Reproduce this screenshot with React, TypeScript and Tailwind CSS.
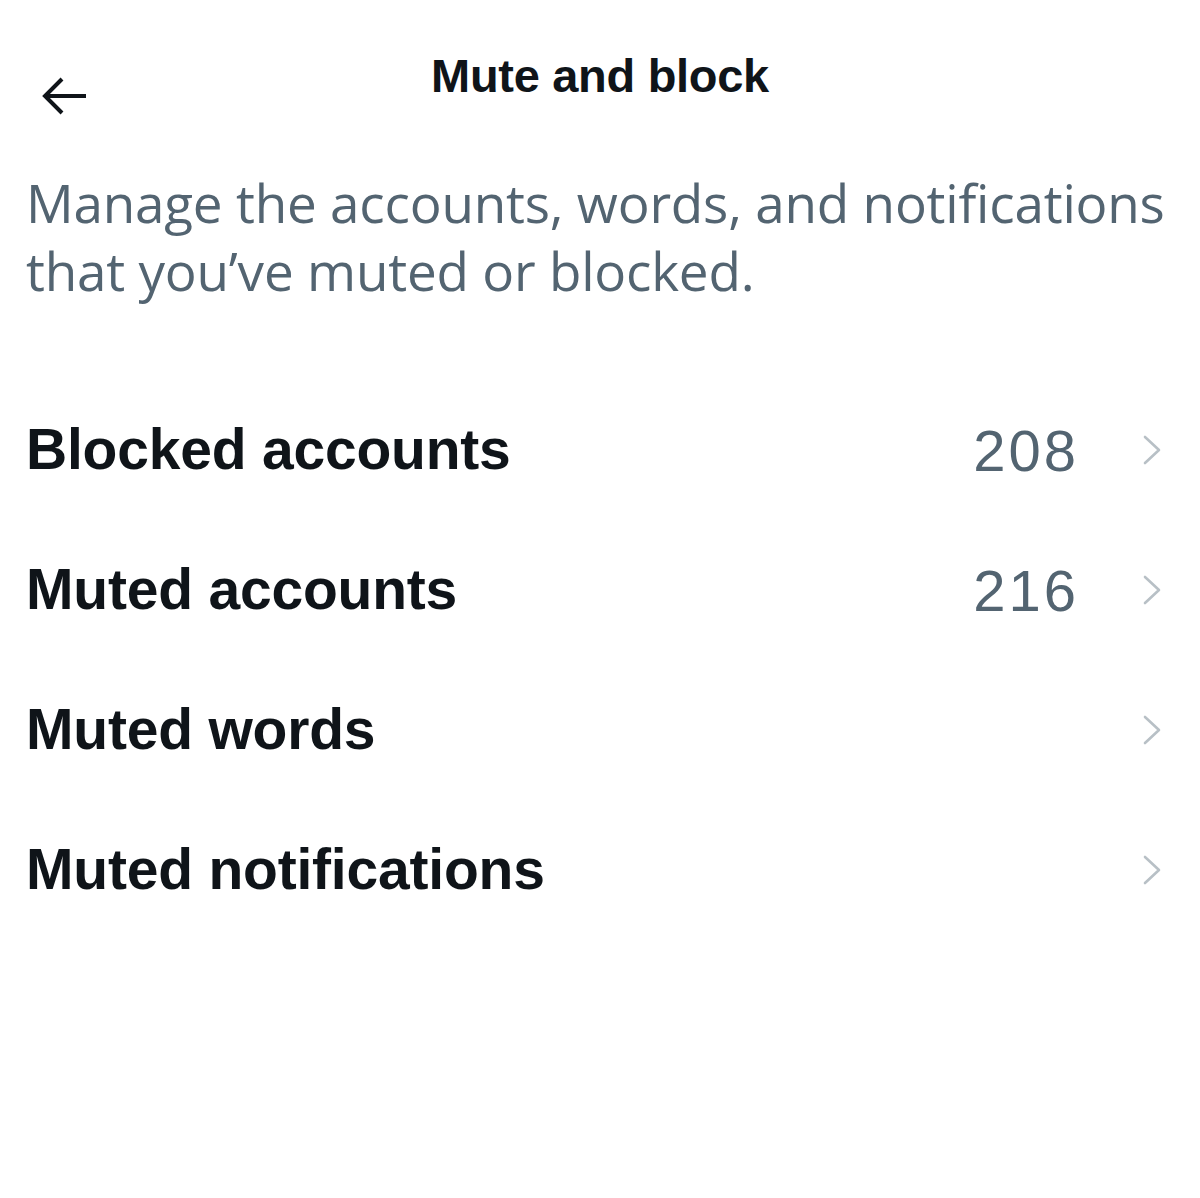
import React from "react";

const rows: { label: string; count?: string }[] = [
  { label: "Blocked accounts", count: "208" },
  { label: "Muted accounts", count: "216" },
  { label: "Muted words" },
  { label: "Muted notifications" },
];

function Chevron() {
  return (
    <svg width="24" height="32" viewBox="0 0 24 32" fill="none" className="shrink-0">
      <path d="M5 3 L19 16 L5 29" stroke="#b8c0c6" strokeWidth="2.6" strokeLinecap="round" strokeLinejoin="round" />
    </svg>
  );
}

export default function App() {
  return (
    <div className="w-[1200px] h-[1198px] bg-white flex flex-col" style={{ fontFamily: '"Liberation Sans", Arial, sans-serif' }}>
      <div className="relative h-[150px] flex items-start justify-center pt-[52px]">
        <button className="absolute left-[40px] top-[76px] w-[50px] h-[40px] flex items-center justify-center">
          <svg width="50" height="40" viewBox="0 0 50 40" fill="none">
            <path d="M46 20 H6 M22 3 L5 20 L22 37" stroke="#0f1419" strokeWidth="4" strokeLinejoin="miter" />
          </svg>
        </button>
        <h1 className="text-[#0f1419] text-[47px] font-bold leading-none tracking-[-0.3px]">
          Mute and block
        </h1>
      </div>
      <p className="px-[26px] text-[#536471] text-[53px] leading-[68px] mt-[19px]" style={{ fontFamily: '"Open Sans", "Liberation Sans", sans-serif', letterSpacing: "-0.2px" }}>
        Manage the accounts, words, and notifications that you’ve muted or blocked.
      </p>
      <div className="flex flex-col mt-[75px]">
        {rows.map((r) => (
          <div key={r.label} className="h-[140px] flex items-center pl-[26px] pr-[36px]">
            <span className="flex-1 text-[#0f1419] text-[57px] font-bold tracking-[-0.2px]">{r.label}</span>
            {r.count && <span className="text-[#536471] text-[58px] tracking-[3px] mr-[61px]">{r.count}</span>}
            <Chevron />
          </div>
        ))}
      </div>
    </div>
  );
}
